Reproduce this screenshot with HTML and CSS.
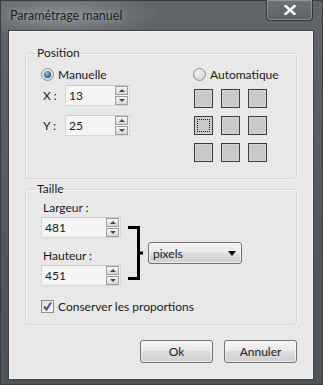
FILE: index.html
```html
<!doctype html>
<html lang="fr">
<head>
<meta charset="UTF-8">
<title>Paramétrage manuel</title>
<link rel="stylesheet" href="styles.css">
</head>
<body>
<div class="window">
  <div class="titlebar">
    <span class="title">Paramétrage manuel</span>
    <button class="close" type="button">
      <svg width="12" height="10" viewBox="0 0 12 10"><path d="M1.5 1 L10.5 9 M10.5 1 L1.5 9" stroke="#fff" stroke-width="2.4" stroke-linecap="square"/></svg>
    </button>
  </div>
  <div class="client">
    <fieldset class="group group-pos">
      <legend>Position</legend>
      <div class="pos-body">
        <div class="manual">
          <label class="radio"><span class="radio-dot on"></span>Manuelle</label>
          <div class="coord">
            <span class="coord-label">X :</span>
            <div class="spin spin-small"><span class="spin-value">13</span><span class="arrows"><i class="up"></i><i class="down"></i></span></div>
          </div>
          <div class="coord coord-y">
            <span class="coord-label">Y :</span>
            <div class="spin spin-small"><span class="spin-value">25</span><span class="arrows"><i class="up"></i><i class="down"></i></span></div>
          </div>
        </div>
        <div class="auto">
          <label class="radio"><span class="radio-dot"></span>Automatique</label>
          <div class="anchors">
            <span class="cell"></span><span class="cell"></span><span class="cell"></span>
            <span class="cell focus"></span><span class="cell"></span><span class="cell"></span>
            <span class="cell"></span><span class="cell"></span><span class="cell"></span>
          </div>
        </div>
      </div>
    </fieldset>

    <fieldset class="group group-size">
      <legend>Taille</legend>
      <div class="size-body">
        <div class="dims">
          <div class="field-label">Largeur :</div>
          <div class="spin spin-wide"><span class="spin-value">481</span><span class="arrows"><i class="up"></i><i class="down"></i></span></div>
          <div class="field-label second">Hauteur :</div>
          <div class="spin spin-wide"><span class="spin-value">451</span><span class="arrows"><i class="up"></i><i class="down"></i></span></div>
        </div>
        <svg class="bracket" width="15" height="56" viewBox="0 0 15 56"><path d="M0 2.5 H10.5 V53.5 H0 M10.5 28 H15" fill="none" stroke="#000" stroke-width="3"/></svg>
        <div class="select"><span>pixels</span><svg width="8" height="5" viewBox="0 0 8 5"><path d="M0 0 H8 L4 5 Z" fill="#000"/></svg></div>
      </div>
      <label class="check"><span class="box"><svg width="11" height="11" viewBox="0 0 11 11"><path d="M2 5.5 L4.5 8.5 L9 1.5" fill="none" stroke="#3a5a8c" stroke-width="2"/></svg></span>Conserver les proportions</label>
    </fieldset>

    <div class="actions">
      <button class="btn" type="button">Ok</button>
      <button class="btn" type="button">Annuler</button>
    </div>
  </div>
</div>
</body>
</html>
```

FILE: styles.css
```css
body {
    margin: 0;
    background: #2b2f33;
    font-family: Lato, "Noto Sans", sans-serif;
    font-size: 12px;
    color: #1a1a1a;
}
.window {
    width: 323px;
    height: 385px;
    box-sizing: border-box;
    border: 1px solid #3a3e42;
    background: radial-gradient(ellipse 100px 24px at 60px 14px, #868b90, rgba(125,130,135,0)),
                linear-gradient(#60656a, #53585d 60%, #4e5357);
    padding: 0 8px 4px 7px;
    display: flex;
    flex-direction: column;
}
.titlebar {
    height: 29px;
    display: flex;
    align-items: flex-start;
    justify-content: space-between;
}
.title {
    margin: 7px 0 0 2px;
    font-size: 12.5px;
    color: #1e1e1e;
    text-shadow: 0 0 6px rgba(210,214,218,0.7);
}
.close {
    width: 47px;
    height: 21px;
    margin-top: -1px;
    margin-right: 1px;
    border: 1px solid #33373b;
    border-top: none;
    border-radius: 0 0 4px 4px;
    background: linear-gradient(#6e7378, #5c6166);
    box-shadow: inset 0 0 0 1px rgba(255,255,255,0.25);
    display: flex;
    align-items: center;
    justify-content: center;
    padding: 0;
}
.client {
    flex: 1;
    background: #e8e8e8;
    border: 1px solid #3c4044;
    box-shadow: inset 0 0 0 1px #f4f4f4;
    padding: 14px 16px 0 16px;
}
.group {
    margin: 0;
    padding: 0 0 0 15px;
    border: 1px solid #d2d4d6;
    border-radius: 3px;
    box-shadow: inset 1px 1px 0 #f6f6f6, 1px 1px 0 #f6f6f6;
}
.group legend {
    padding: 0 2px;
    margin-left: -6px;
    line-height: 16px;
}
.pos-body {
    display: flex;
    padding: 5px 0 16px;
}
.manual {
    width: 152px;
}
.radio, .check {
    display: flex;
    align-items: center;
    height: 16px;
}
.radio-dot {
    width: 11px;
    height: 11px;
    border-radius: 50%;
    border: 1px solid #8d8f91;
    background: radial-gradient(circle at 40% 35%, #f4f4f4, #c9cacb);
    margin-right: 4px;
    display: flex;
    align-items: center;
    justify-content: center;
}
.radio-dot.on::after {
    content: "";
    width: 7px;
    height: 7px;
    border-radius: 50%;
    background: radial-gradient(circle at 40% 35%, #8fc0ea, #1c5a96 70%);
}
.coord {
    display: flex;
    align-items: center;
    margin-top: 3px;
}
.coord-y {
    margin-top: 9px;
}
.coord-label {
    width: 22px;
    padding-left: 2px;
}
.spin {
    display: flex;
    align-items: center;
    height: 21px;
    box-sizing: border-box;
    border: 1px solid #d6d6d6;
    border-top-color: #c8c8c8;
    background: #f5f5f5;
    padding-right: 1px;
}
.spin-small {
    width: 65px;
}
.spin-wide {
    width: 80px;
}
.spin-value {
    flex: 1;
    padding-left: 3px;
}
.arrows {
    display: flex;
    flex-direction: column;
    gap: 1px;
}
.arrows i {
    width: 11px;
    height: 7px;
    border: 1px solid #9c9ea0;
    background: linear-gradient(#f6f6f6, #d8d8d8);
    display: flex;
    align-items: center;
    justify-content: center;
}
.arrows i::after {
    content: "";
    border-left: 3px solid transparent;
    border-right: 3px solid transparent;
}
.arrows .up::after {
    border-bottom: 3px solid #4a4a4a;
}
.arrows .down::after {
    border-top: 3px solid #4a4a4a;
}
.anchors {
    display: grid;
    grid-template-columns: repeat(3, 19px);
    grid-auto-rows: 19px;
    gap: 8px;
    margin: 7px 0 0 1px;
}
.cell {
    box-sizing: border-box;
    border: 1px solid #3c3c3c;
    background: #c9c9c9;
    box-shadow: inset 0 0 0 1px #d4d4d4;
}
.cell.focus {
    display: flex;
    align-items: center;
    justify-content: center;
}
.cell.focus::after {
    content: "";
    width: 11px;
    height: 11px;
    border: 1px dotted #1a1a1a;
}
.group-size {
    margin-top: 2px;
}
.size-body {
    display: flex;
    align-items: center;
    padding-top: 3px;
}
.dims {
    width: 87px;
}
.field-label {
    line-height: 16px;
    padding-left: 2px;
    margin-bottom: 1px;
}
.field-label.second {
    margin-top: 10px;
}
.bracket {
    margin-top: 20px;
    margin-right: 5px;
    display: block;
}
.select {
    margin-top: 20px;
    width: 94px;
    height: 22px;
    box-sizing: border-box;
    border: 1px solid #707070;
    border-radius: 3px;
    background: linear-gradient(#f2f2f2, #ebebeb 45%, #dddddd 50%, #cfcfcf);
    box-shadow: inset 0 0 0 1px rgba(255,255,255,0.6);
    display: flex;
    align-items: center;
    justify-content: space-between;
    padding: 0 5px 0 4px;
}
.check {
    margin: 12px 0 10px 0;
}
.box {
    width: 11px;
    height: 11px;
    border: 1px solid #8e8f8f;
    background: linear-gradient(135deg, #dcdcdc, #f8f8f8);
    margin-right: 4px;
    display: flex;
    align-items: center;
    justify-content: center;
}
.actions {
    display: flex;
    justify-content: flex-end;
    gap: 11px;
    margin-top: 15px;
}
.btn {
    width: 73px;
    height: 23px;
    border: 1px solid #707070;
    border-radius: 3px;
    background: linear-gradient(#f2f2f2, #ebebeb 45%, #dddddd 50%, #cfcfcf);
    box-shadow: inset 0 0 0 1px rgba(255,255,255,0.6);
    font-family: Lato, "Noto Sans", sans-serif;
    font-size: 12px;
    color: #1a1a1a;
    padding: 0;
}
```
